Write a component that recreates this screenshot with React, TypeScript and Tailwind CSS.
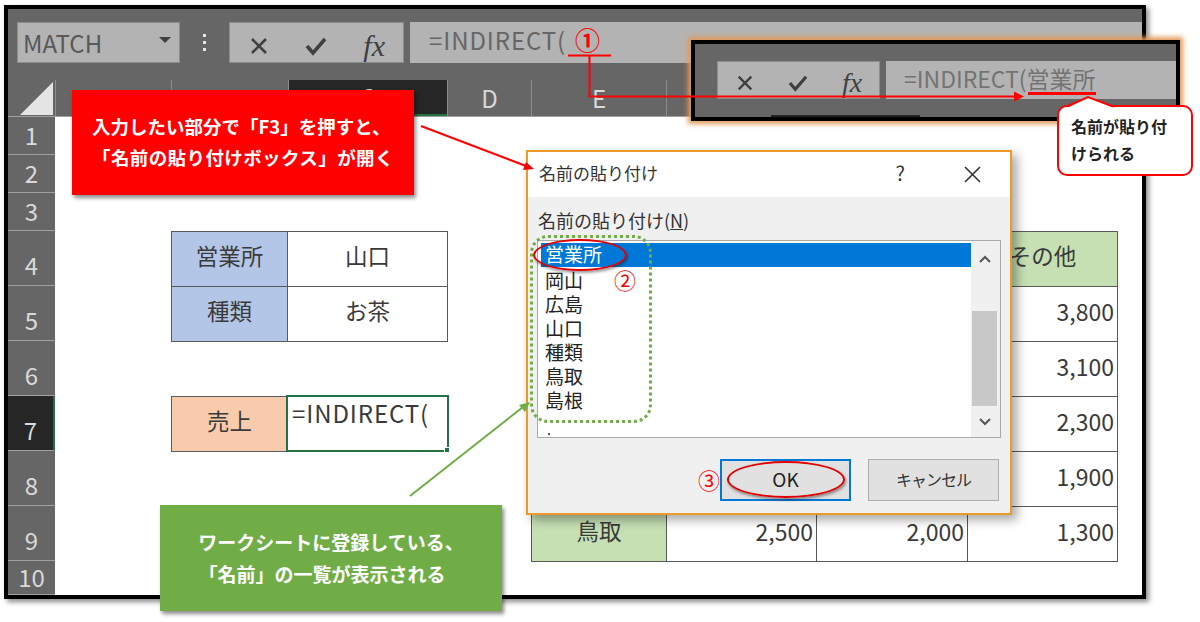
import { ReactNode } from "react"

const font = "font-['Noto_Sans_CJK_JP','Noto_Sans',sans-serif]"

const columns = [
  { label: "A", width: "w-[116px]" },
  { label: "B", width: "w-[117px]" },
  { label: "C", width: "w-[159px]", active: true },
  { label: "D", width: "w-[84px]" },
  { label: "E", width: "w-[135px]" },
  { label: "F", width: "w-[150px]" },
  { label: "G", width: "w-[151px]" },
  { label: "H", width: "w-[150px]" },
]

const rows = [
  { n: 1, h: "h-[38px] pb-[4px]" },
  { n: 2, h: "h-[38px] pb-[4px]" },
  { n: 3, h: "h-[38px] pb-[4px]" },
  { n: 4, h: "h-[55px] pb-[5px]" },
  { n: 5, h: "h-[55px] pb-[5px]" },
  { n: 6, h: "h-[55px] pb-[5px]" },
  { n: 7, h: "h-[55px] pb-[5px]", active: true },
  { n: 8, h: "h-[55px] pb-[5px]" },
  { n: 9, h: "h-[55px] pb-[5px]" },
  { n: 10, h: "h-[34px] pb-[2px]" },
]

const names = ["営業所", "岡山", "広島", "山口", "種類", "鳥取", "島根"]

function Cell({ place, fill = "bg-white", right, children }: { place: string; fill?: string; right?: boolean; children?: ReactNode }) {
  return (
    <div
      className={`${place} ${fill} -mr-px -mb-px flex items-center border border-[#5a5a5a] pb-[6px] text-[#3a3a3a] ${
        right ? "justify-end pr-[3px] text-[23px]" : "justify-center text-[22.5px]"
      }`}
    >
      {children}
    </div>
  )
}

function FxBox({ width, small }: { width: string; small?: boolean }) {
  return (
    <div className={`${width} grid grid-cols-3 place-items-center border border-[#8c8c8c] bg-[#b3b3b3] text-[#404040]`}>
      <svg width={small ? 18 : 20} height={small ? 18 : 20} viewBox="0 0 20 20" fill="none" stroke="currentColor" strokeWidth="2.6">
        <path d="M3 3l14 14M17 3L3 17" />
      </svg>
      <svg width={small ? 20 : 22} height={small ? 18 : 20} viewBox="0 0 22 20" fill="none" stroke="currentColor" strokeWidth="3.6">
        <path d="M2 10l6 7L20 3" />
      </svg>
      <span className={`font-['Liberation_Serif',serif] italic ${small ? "text-[28px]" : "text-[30px]"}`}>fx</span>
    </div>
  )
}

function Toolbar() {
  return (
    <div className="flex h-[54px] bg-[#666] pl-[9px] pt-[13px]">
      <div className="flex w-[163px] items-center justify-between border border-[#8c8c8c] bg-[#b3b3b3] pl-[5px] pr-[8px] text-[24px] text-[#595959]">
        MATCH
        <span className="mb-[5px] h-0 w-0 border-x-[6px] border-t-[6px] border-x-transparent border-t-[#404040]" />
      </div>
      <div className="flex w-[49px] flex-col items-center justify-center gap-[4px]">
        <span className="h-[3px] w-[3px] bg-[#e6e6e6]" />
        <span className="h-[3px] w-[3px] bg-[#e6e6e6]" />
        <span className="h-[3px] w-[3px] bg-[#e6e6e6]" />
      </div>
      <FxBox width="w-[175px]" />
      <div className="ml-[6px] flex flex-1 items-center bg-[#b3b3b3] pb-[5px] pl-[19px] text-[24px] tracking-[0.9px] text-[#666]">=INDIRECT(</div>
    </div>
  )
}

function ColumnHeaders() {
  return (
    <div className="flex h-[54px] border-b border-[#a0a0a0] bg-[#666] pt-[17px]">
      <div className="flex w-[47px] shrink-0 items-end justify-end pb-[1px] pr-[2px]">
        <svg width="33" height="33" viewBox="0 0 33 33">
          <path d="M0 33L33 0v33z" fill="#e4e4e4" />
        </svg>
      </div>
      {columns.map((c) => (
        <div
          key={c.label}
          className={`${c.width} flex shrink-0 items-center justify-center border-l border-[#8c8c8c] text-[24px] text-[#d9d9d9] ${
            c.active ? "border-b-2 border-b-[#217346] bg-[#262626]" : ""
          }`}
        >
          {c.label}
        </div>
      ))}
    </div>
  )
}

function Sheet() {
  return (
    <div className="flex">
      <div className="w-[47px] shrink-0 bg-[#666]">
        {rows.map((r) => (
          <div
            key={r.n}
            className={`${r.h} flex items-end justify-center border-b border-[#a0a0a0] text-[24px] leading-[30px] text-[#d9d9d9] ${
              r.active ? "border-r-2 border-r-[#217346] bg-[#262626]" : ""
            }`}
          >
            {r.n}
          </div>
        ))}
      </div>
      <div className="grid flex-1 grid-cols-[116px_116px_160px_84px_135px_150px_151px_150px_1fr] grid-rows-[38px_38px_38px_55px_55px_55px_55px_55px_55px_34px] bg-white">
        <Cell place="col-start-2 row-start-4" fill="bg-[#b4c6e7]">営業所</Cell>
        <Cell place="col-start-3 row-start-4">山口</Cell>
        <Cell place="col-start-2 row-start-5" fill="bg-[#b4c6e7]">種類</Cell>
        <Cell place="col-start-3 row-start-5">お茶</Cell>
        <Cell place="col-start-2 row-start-7" fill="bg-[#f8cbad]">売上</Cell>
        <div className="relative col-start-3 row-start-7 -mb-px -ml-px -mr-[2px] -mt-px border-2 border-[#217346] bg-white pl-[4px] text-[24px] leading-[32px] tracking-[0.9px] text-[#3a3a3a]">
          =INDIRECT(
          <span className="absolute -bottom-[3px] -right-[3px] h-[6px] w-[6px] border border-white bg-[#217346]" />
        </div>

        <Cell place="col-start-5 row-start-4" fill="bg-[#c6e0b4]" />
        <Cell place="col-start-6 row-start-4" fill="bg-[#c6e0b4]" />
        <Cell place="col-start-7 row-start-4" fill="bg-[#c6e0b4]" />
        <Cell place="col-start-8 row-start-4" fill="bg-[#c6e0b4]">その他</Cell>

        <Cell place="col-start-5 row-start-5" fill="bg-[#c6e0b4]" />
        <Cell place="col-start-6 row-start-5" right />
        <Cell place="col-start-7 row-start-5" right />
        <Cell place="col-start-8 row-start-5" right>3,800</Cell>

        <Cell place="col-start-5 row-start-6" fill="bg-[#c6e0b4]" />
        <Cell place="col-start-6 row-start-6" right />
        <Cell place="col-start-7 row-start-6" right />
        <Cell place="col-start-8 row-start-6" right>3,100</Cell>

        <Cell place="col-start-5 row-start-7" fill="bg-[#c6e0b4]" />
        <Cell place="col-start-6 row-start-7" right />
        <Cell place="col-start-7 row-start-7" right />
        <Cell place="col-start-8 row-start-7" right>2,300</Cell>

        <Cell place="col-start-5 row-start-8" fill="bg-[#c6e0b4]" />
        <Cell place="col-start-6 row-start-8" right />
        <Cell place="col-start-7 row-start-8" right />
        <Cell place="col-start-8 row-start-8" right>1,900</Cell>

        <Cell place="col-start-5 row-start-9" fill="bg-[#c6e0b4]">鳥取</Cell>
        <Cell place="col-start-6 row-start-9" right>2,500</Cell>
        <Cell place="col-start-7 row-start-9" right>2,000</Cell>
        <Cell place="col-start-8 row-start-9" right>1,300</Cell>
      </div>
    </div>
  )
}

function Inset() {
  return (
    <div className="absolute left-[691px] top-[40px] flex h-[81px] w-[489px] flex-col border-4 border-black bg-[#666] shadow-[0_0_5px_3px_#e39a5a]">
      <div className="mt-[17px] flex h-[38px] pl-[22px]">
        <FxBox width="w-[163px]" small />
        <div className="ml-[6px] flex flex-1 items-center bg-[#b3b3b3] pb-[4px] pl-[18px] text-[23px] leading-[28px] text-[#737373]">=INDIRECT(営業所</div>
      </div>
      <div className="ml-[76px] mt-auto h-[2px] w-[149px] bg-[#222]" />
    </div>
  )
}

function Dialog() {
  return (
    <div className="absolute left-[526px] top-[150px] flex h-[365px] w-[486px] flex-col border-2 border-[#ed9a2d] bg-[#f0f0f0] text-[#333] shadow-[5px_5px_10px_rgba(0,0,0,0.35)]">
      <div className="flex h-[45px] items-center bg-white pb-[3px] pl-[11px] text-[17px]">
        <span>名前の貼り付け</span>
        <span className="ml-auto mr-[59px] text-[20px]">?</span>
        <svg className="mr-[29px] mt-[3px]" width="17" height="17" viewBox="0 0 17 17" fill="none" stroke="#333" strokeWidth="1.6">
          <path d="M1 1l15 15M16 1L1 16" />
        </svg>
      </div>
      <div className="pl-[10px] pt-[10px] text-[18px] leading-[26px]">
        名前の貼り付け(<span className="underline">N</span>)
      </div>
      <div className="mx-[9px] mt-[7px] flex h-[198px] overflow-hidden border border-[#a9a9a9] bg-white">
        <div className="relative flex-1 pl-[3px] pt-[2px]">
          {names.map((n, i) => (
            <div
              key={n}
              className={`flex h-[24px] items-center pl-[4px] text-[19px] leading-[22px] ${
                i === 0 ? "bg-[#0078d7] pb-[3px] text-white" : "pt-px text-[#222]"
              }`}
            >
              {n}
            </div>
          ))}
          <span className="absolute bottom-[2px] left-[10px] h-[2px] w-[2px] bg-[#555]" />
        </div>
        <div className="relative w-[29px] bg-[#f0f0f0]">
          <svg className="absolute left-[8px] top-[14px]" width="12" height="8" viewBox="0 0 12 8" fill="none" stroke="#555" strokeWidth="2">
            <path d="M1 7l5-5 5 5" />
          </svg>
          <div className="absolute left-[1px] top-[70px] h-[95px] w-[25px] bg-[#c8c8c8]" />
          <svg className="absolute left-[8px] top-[177px]" width="12" height="8" viewBox="0 0 12 8" fill="none" stroke="#555" strokeWidth="2">
            <path d="M1 1l5 5 5-5" />
          </svg>
        </div>
      </div>
      <div className="flex justify-end gap-[17px] pr-[11px] pt-[21px]">
        <button className="h-[42px] w-[131px] border-2 border-[#0078d7] bg-[#e1e1e1] pb-[2px] text-[19px] text-[#222]">OK</button>
        <button className="h-[42px] w-[131px] border border-[#adadad] bg-[#e1e1e1] pb-[2px] text-[16px] tracking-[-1px] text-[#333]">キャンセル</button>
      </div>
    </div>
  )
}

export default function App() {
  return (
    <div className={`${font} relative h-[622px] w-[1200px] overflow-hidden bg-white pl-[4px] pt-[5px]`}>
      <div className="h-[594px] w-[1142px] border-4 border-black shadow-[3px_3px_5px_rgba(0,0,0,0.45)]">
        <Toolbar />
        <ColumnHeaders />
        <Sheet />
      </div>

      <Inset />
      <Dialog />

      {/* red note */}
      <div className="absolute left-[72px] top-[90px] flex h-[105px] w-[342px] flex-col justify-center gap-[9px] bg-[#ff0000] pb-[3px] pl-[20px] text-[18.5px] font-bold leading-[22px] text-white shadow-[2px_3px_4px_rgba(0,0,0,0.45)]">
        <div>入力したい部分で「F3」を押すと、</div>
        <div className="tracking-[0.4px]">「名前の貼り付けボックス」が開く</div>
      </div>

      {/* green note */}
      <div className="absolute left-[160px] top-[505px] flex h-[106px] w-[342px] flex-col items-center justify-center gap-[10px] bg-[#70ad47] text-[19px] font-bold leading-[22px] text-white shadow-[2px_3px_4px_rgba(0,0,0,0.45)]">
        <div>ワークシートに登録している、</div>
        <div className="mr-[18px]">「名前」の一覧が表示される</div>
      </div>

      {/* white note */}
      <div className="absolute left-[1057px] top-[105px] flex h-[71px] w-[136px] flex-col justify-center gap-[7px] rounded-[10px] border-2 border-[#ff0000] bg-white pb-[2px] pl-[12px] text-[16px] font-bold leading-[20px] text-[#222]">
        <div>名前が貼り付</div>
        <div>けられる</div>
      </div>

      {/* marks on the list */}
      <div className="absolute left-[530px] top-[235px] h-[188px] w-[122px] rounded-[18px] border-[3px] border-dotted border-[#70ad47]" />
      <div className="absolute left-[533px] top-[239px] h-[32px] w-[94px] rounded-[50%] border-2 border-[#e00000] shadow-[1px_2px_3px_rgba(0,0,0,0.4)]" />
      <div className="absolute left-[727px] top-[461px] h-[37px] w-[118px] rounded-[50%] border-2 border-[#e00000] shadow-[1px_2px_3px_rgba(0,0,0,0.4)]" />

      <div className="absolute left-[575px] top-[22px] text-[25px] font-bold leading-[34px] text-[#ff0000]">①</div>
      <div className="absolute left-[614px] top-[264px] text-[22px] leading-[30px] text-[#ff0000]">②</div>
      <div className="absolute left-[698px] top-[464px] text-[22px] leading-[30px] text-[#ff0000]">③</div>

      {/* connectors */}
      <svg className="pointer-events-none absolute left-0 top-0" width="1200" height="622" viewBox="0 0 1200 622" fill="none">
        <path d="M568 55.5h43M589.5 56v40.5H1016" stroke="#ff0000" strokeWidth="2" />
        <path d="M1024 96.5l-10-5v10z" fill="#ff0000" />
        <path d="M1028 93.5h68" stroke="#ff0000" strokeWidth="3" />
        <path d="M421 126l105 40" stroke="#ff0000" strokeWidth="2" />
        <path d="M534 169l-11 1 3-8z" fill="#ff0000" />
        <path d="M410 496l113-89" stroke="#70ad47" strokeWidth="2" />
        <path d="M530 402l-5 10-6-7z" fill="#70ad47" />
        <path d="M1069 107L1088 97l25 10" fill="white" />
        <path d="M1068 106L1088 97l25 9.500" stroke="#ff0000" strokeWidth="2" />
      </svg>
    </div>
  )
}
